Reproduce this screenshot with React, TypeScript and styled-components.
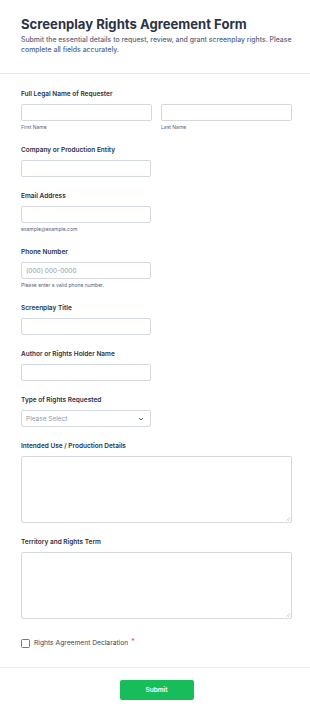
import React from 'react';
import styled, { createGlobalStyle } from 'styled-components';

const GlobalStyle = createGlobalStyle`
  html, body {
    margin: 0;
    padding: 0;
    background: #ffffff;
  }
  body {
    font-family: Inter, "Noto Sans", "Liberation Sans", sans-serif;
    color: #2c3345;
  }
`;

const Page = styled.div`
  width: 310px;
  background: #ffffff;
`;

const Header = styled.header`
  padding: 16px 18px 18px 21px;
  border-bottom: 1px solid #e6e9f0;
`;

const Title = styled.h1`
  margin: 0;
  font-size: 13.1px;
  line-height: 17px;
  font-weight: 700;
  color: #2c3345;
`;

const Subtitle = styled.p`
  margin: 2px 0 0;
  font-size: 6.9px;
  line-height: 10px;
  color: #57647e;
  font-weight: 500;
`;

const Body = styled.div`
  display: flex;
  flex-direction: column;
  gap: 15px;
  padding: 16px 18px 19px 21px;
  border-bottom: 1px solid #eef0f5;
`;

const Field = styled.div`
  display: flex;
  flex-direction: column;
`;

const Label = styled.label`
  font-size: 6.5px;
  line-height: 9px;
  font-weight: 600;
  color: #2c3345;
  margin-bottom: 5px;
`;

const Row = styled.div`
  display: grid;
  grid-template-columns: 131px 131px;
  column-gap: 9px;
`;

const Col = styled.div`
  display: flex;
  flex-direction: column;
`;

const Input = styled.input<{ $w?: number }>`
  box-sizing: border-box;
  width: ${p => (p.$w ? `${p.$w}px` : '100%')};
  height: 17px;
  margin: 0;
  padding: 0 4px;
  border: 1px solid #d3d8e1;
  border-radius: 2px;
  background: #ffffff;
  font-family: inherit;
  font-size: 6.5px;
  color: #2c3345;
  outline: none;
  &::placeholder {
    color: #8d98ae;
  }
`;

const Sub = styled.span`
  margin-top: 3px;
  font-size: 5px;
  line-height: 7px;
  color: #57647e;
`;

const SelectBox = styled.div`
  box-sizing: border-box;
  width: 130px;
  height: 17px;
  padding: 0 6px 0 4px;
  display: flex;
  align-items: center;
  justify-content: space-between;
  border: 1px solid #d3d8e1;
  border-radius: 2px;
  font-size: 6.5px;
  color: #8d98ae;
`;

const AreaWrap = styled.div`
  position: relative;
  width: 271px;
`;

const TextArea = styled.textarea`
  box-sizing: border-box;
  width: 271px;
  height: 67px;
  margin: 0;
  padding: 4px;
  border: 1px solid #d3d8e1;
  border-radius: 2px;
  font-family: inherit;
  font-size: 6.5px;
  resize: none;
  outline: none;
  display: block;
`;

const Grip = styled.svg`
  position: absolute;
  right: 2px;
  bottom: 2px;
`;

const CheckRow = styled.div`
  display: flex;
  align-items: center;
  gap: 4px;
  margin-top: 4px;
`;

const Box = styled.span`
  box-sizing: border-box;
  width: 9px;
  height: 9px;
  border: 1px solid #6f7a8f;
  border-radius: 1.5px;
`;

const CheckLabel = styled.span`
  font-size: 6.7px;
  line-height: 9px;
  color: #3b4458;
`;

const Star = styled.span`
  color: #f23a3c;
  margin-left: 3px;
  font-size: 7px;
  position: relative;
  top: -1px;
`;

const Footer = styled.div`
  display: flex;
  justify-content: center;
  padding: 12px 0 17px;
`;

const Submit = styled.button`
  width: 74px;
  height: 20px;
  margin-left: 3px;
  border: none;
  border-radius: 2px;
  background: #18bd5b;
  color: #ffffff;
  font-family: inherit;
  font-size: 6.5px;
  font-weight: 600;
  padding: 0;
`;

function Area() {
  return (
    <AreaWrap>
      <TextArea />
      <Grip width="4" height="4" viewBox="0 0 4 4">
        <path d="M4 0L0 4M4 2L2 4" stroke="#c9ced8" strokeWidth="0.8" />
      </Grip>
    </AreaWrap>
  );
}

export default function App() {
  return (
    <Page>
      <GlobalStyle />
      <Header>
        <Title>Screenplay Rights Agreement Form</Title>
        <Subtitle>
          Submit the essential details to request, review, and grant screenplay rights. Please
          complete all fields accurately.
        </Subtitle>
      </Header>
      <Body>
        <Field>
          <Label>Full Legal Name of Requester</Label>
          <Row>
            <Col>
              <Input />
              <Sub>First Name</Sub>
            </Col>
            <Col>
              <Input />
              <Sub>Last Name</Sub>
            </Col>
          </Row>
        </Field>
        <Field>
          <Label>Company or Production Entity</Label>
          <Input $w={130} />
        </Field>
        <Field>
          <Label>Email Address</Label>
          <Input $w={130} />
          <Sub>example@example.com</Sub>
        </Field>
        <Field>
          <Label>Phone Number</Label>
          <Input $w={130} placeholder="(000) 000-0000" />
          <Sub>Please enter a valid phone number.</Sub>
        </Field>
        <Field>
          <Label>Screenplay Title</Label>
          <Input $w={130} />
        </Field>
        <Field>
          <Label>Author or Rights Holder Name</Label>
          <Input $w={130} />
        </Field>
        <Field>
          <Label>Type of Rights Requested</Label>
          <SelectBox>
            <span>Please Select</span>
            <svg width="6" height="4" viewBox="0 0 6 4">
              <path d="M1 1l2 2 2-2" fill="none" stroke="#57647e" strokeWidth="1" />
            </svg>
          </SelectBox>
        </Field>
        <Field>
          <Label>Intended Use / Production Details</Label>
          <Area />
        </Field>
        <Field>
          <Label>Territory and Rights Term</Label>
          <Area />
        </Field>
        <CheckRow>
          <Box />
          <CheckLabel>
            Rights Agreement Declaration<Star>*</Star>
          </CheckLabel>
        </CheckRow>
      </Body>
      <Footer>
        <Submit type="button">Submit</Submit>
      </Footer>
    </Page>
  );
}
